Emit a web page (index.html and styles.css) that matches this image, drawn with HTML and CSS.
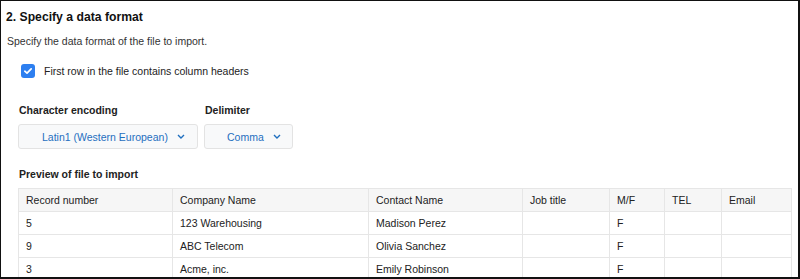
FILE: index.html
```html
<!DOCTYPE html>
<html>
<head>
<meta charset="utf-8">
<link rel="stylesheet" href="styles.css">
</head>
<body>
<div class="frame">
  <h2 class="title">2. Specify a data format</h2>
  <p class="desc">Specify the data format of the file to import.</p>
  <label class="check">
    <span class="box"><svg width="10" height="8" viewBox="0 0 10 8"><path d="M1.8 4.2 L4 6.2 L8.2 1.8" fill="none" stroke="#fff" stroke-width="1.7" stroke-linecap="round" stroke-linejoin="round"/></svg></span>
    <span>First row in the file contains column headers</span>
  </label>
  <div class="fields">
    <div class="field">
      <div class="flabel">Character encoding</div>
      <div class="select enc"><span>Latin1 (Western European)</span><svg class="chev" width="8" height="5" viewBox="0 0 8 5"><path d="M1 1 L4 4 L7 1" fill="none" stroke="#1f6fbf" stroke-width="1.4"/></svg></div>
    </div>
    <div class="field">
      <div class="flabel">Delimiter</div>
      <div class="select delim"><span>Comma</span><svg class="chev" width="8" height="5" viewBox="0 0 8 5"><path d="M1 1 L4 4 L7 1" fill="none" stroke="#1f6fbf" stroke-width="1.4"/></svg></div>
    </div>
  </div>
  <div class="plabel">Preview of file to import</div>
  <table class="preview">
    <colgroup>
      <col class="c1"><col class="c2"><col class="c3"><col class="c4"><col class="c5"><col class="c6"><col class="c7">
    </colgroup>
    <thead>
      <tr><th>Record number</th><th>Company Name</th><th>Contact Name</th><th>Job title</th><th>M/F</th><th>TEL</th><th>Email</th></tr>
    </thead>
    <tbody>
      <tr><td>5</td><td>123 Warehousing</td><td>Madison Perez</td><td></td><td>F</td><td></td><td></td></tr>
      <tr><td>9</td><td>ABC Telecom</td><td>Olivia Sanchez</td><td></td><td>F</td><td></td><td></td></tr>
      <tr><td>3</td><td>Acme, inc.</td><td>Emily Robinson</td><td></td><td>F</td><td></td><td></td></tr>
    </tbody>
  </table>
</div>
</body>
</html>
```

FILE: styles.css
```css
html, body {
  margin: 0;
  padding: 0;
  background: #fff;
}
body {
  font-family: "Liberation Sans", Arial, sans-serif;
  color: #222;
  font-size: 10.5px;
}
.frame {
  box-sizing: border-box;
  width: 800px;
  height: 279px;
  overflow: hidden;
  border-top: 1px solid #111;
  border-left: 1px solid #111;
  border-right: 2px solid #111;
  border-bottom: 2px solid #111;
  padding: 7px 0 0 5px;
}
.title {
  margin: 0;
  font-size: 12.2px;
  font-weight: bold;
  color: #111;
  line-height: 18px;
}
.desc {
  margin: 8px 0 0 1px;
  font-size: 10.5px;
  line-height: 14px;
  color: #333;
}
.check {
  display: flex;
  align-items: center;
  gap: 9px;
  margin: 16px 0 0 15px;
  height: 14px;
  font-size: 10.5px;
  color: #222;
}
.box {
  width: 14px;
  height: 14px;
  border-radius: 3px;
  background: #2d7ff0;
  display: flex;
  align-items: center;
  justify-content: center;
}
.fields {
  display: flex;
  gap: 6px;
  margin: 26px 0 0 12px;
}
.flabel {
  font-weight: bold;
  font-size: 10.5px;
  line-height: 13px;
  color: #222;
  margin-bottom: 7px;
  padding-left: 1px;
}
.select {
  box-sizing: border-box;
  height: 25px;
  border: 1px solid #e3e3e3;
  border-radius: 3px;
  background: #f8f9fa;
  display: flex;
  align-items: center;
  color: #1f6fbf;
  font-size: 10.5px;
  white-space: nowrap;
}
.select .chev {
  margin-left: 9px;
  flex-shrink: 0;
}
.enc {
  width: 180px;
  padding-left: 23px;
}
.delim {
  width: 89px;
  padding-left: 22px;
}
.plabel {
  margin: 19px 0 0 13px;
  font-weight: bold;
  font-size: 10.5px;
  line-height: 13px;
  color: #222;
}
.preview {
  margin: 7px 0 0 12px;
  border-collapse: collapse;
  table-layout: fixed;
  width: 773px;
  font-size: 10.5px;
}
.c1 { width: 154px; }
.c2 { width: 196px; }
.c3 { width: 154px; }
.c4 { width: 87px; }
.c5 { width: 55px; }
.c6 { width: 57px; }
.c7 { width: 70px; }
.preview th, .preview td {
  border: 1px solid #e6e6e6;
  height: 22px;
  padding: 0 7px;
  text-align: left;
  font-weight: normal;
  color: #222;
  white-space: nowrap;
}
.preview th {
  background: #f6f6f6;
}
```
